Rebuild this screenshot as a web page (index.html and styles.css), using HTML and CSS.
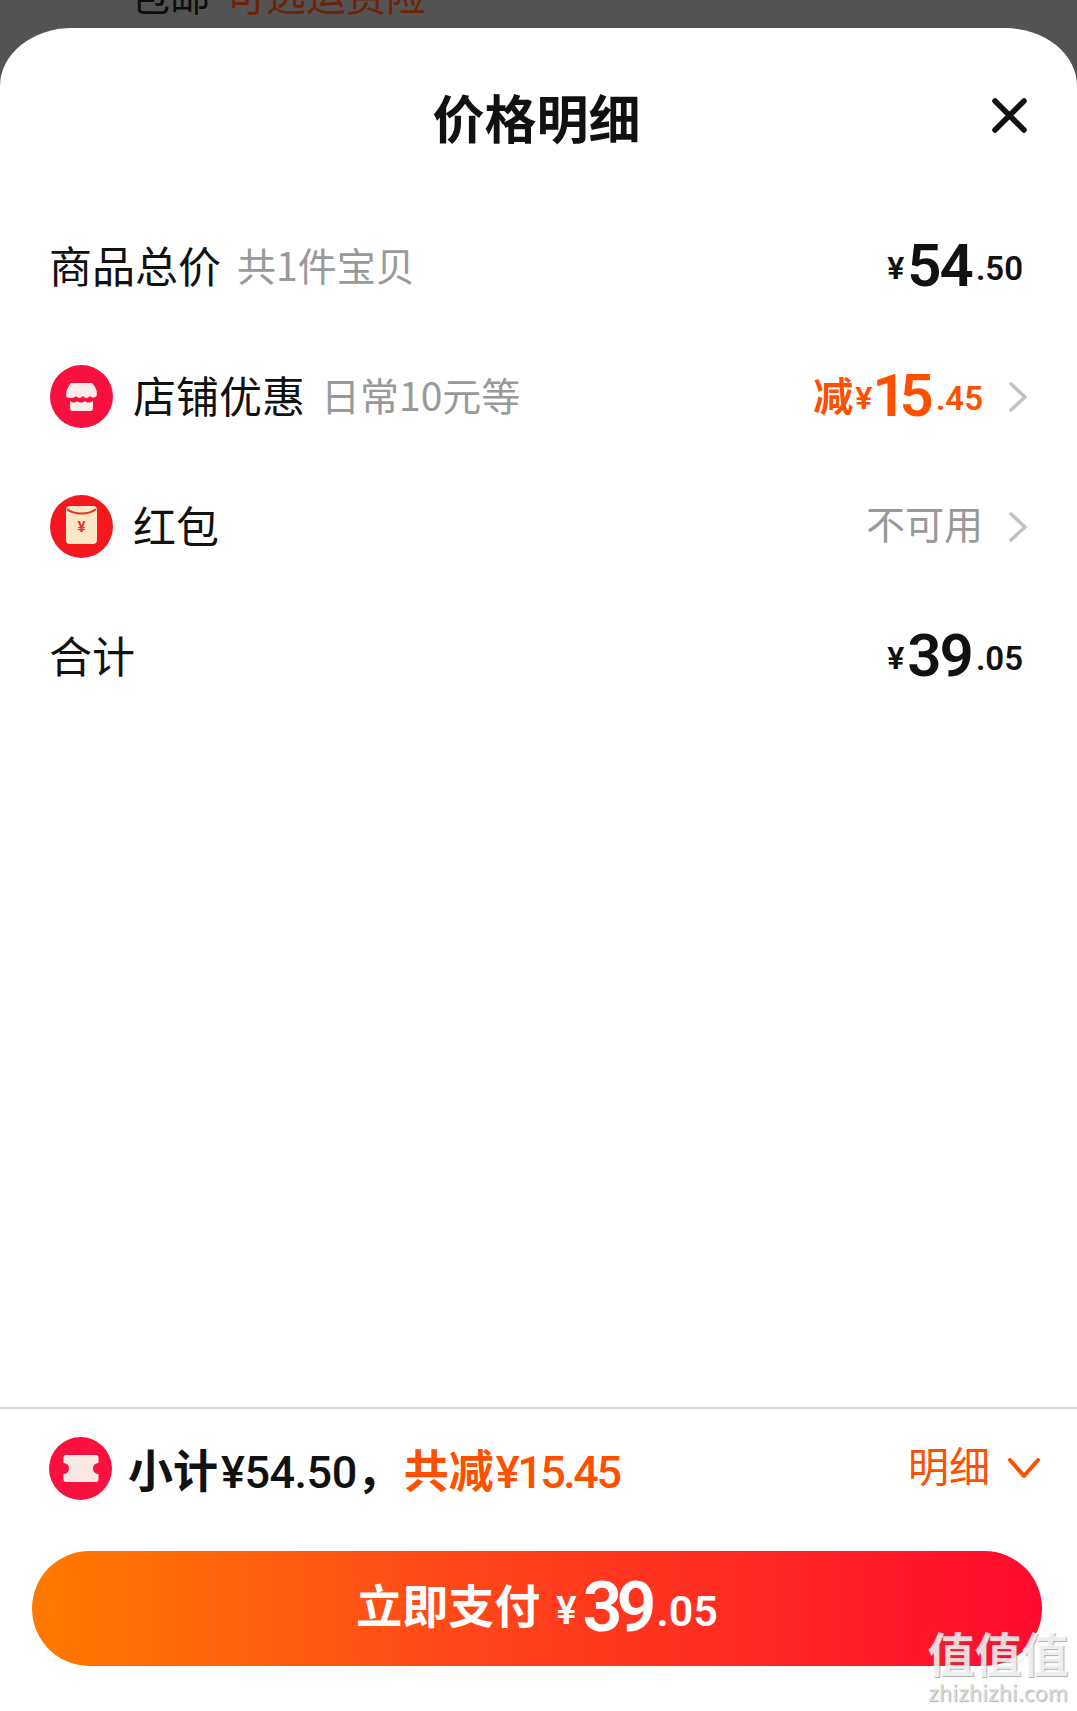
FILE: index.html
```html
<!DOCTYPE html>
<html lang="zh">
<head>
<meta charset="utf-8">
<title>价格明细</title>
<link rel="stylesheet" href="styles.css">
</head>
<body>
<div class="page">
  <div class="backdrop"><div class="backdrop-text"><span>包邮</span><span class="backdrop-red">可选运费险</span></div></div>
  <main class="sheet">
    <header class="head">
      <span></span>
      <h1 class="title">价格明细</h1>
      <svg class="close" viewBox="0 0 35 35"><path d="M3 3L32 32M32 3L3 32"/></svg>
    </header>
    <section class="rows">
      <div class="row">
        <div class="left"><span class="label">商品总价</span><span class="sub">共1件宝贝</span></div>
        <div class="price price-plain"><span class="yen">¥</span><span class="big">54</span><span class="small">.50</span></div>
      </div>
      <div class="row">
        <div class="left">
          <svg class="badge" viewBox="0 0 63 63"><circle cx="31.5" cy="31.5" r="31.5" fill="#f8103f"/><path d="M21 18H42C45 21 47 25 47 29C47 33 42 33.500 40 31C38 33.500 35 33.500 33 31C31 33.500 28 33.500 26 31C24 33.500 19 33.500 16.500 32C15 28 18 21 21 18Z" fill="#fdecea"/><path d="M20 36C23 38 25 38 27 36C29 38 33 38 35 36C37 38 40 38 43 36V43C43 45 42 46 40 46H23C21 46 20 45 20 43Z" fill="#fdecea"/></svg>
          <span class="label">店铺优惠</span><span class="sub">日常10元等</span>
        </div>
        <div class="right">
          <div class="price price-orange"><span class="cut">减</span><span class="yen">¥</span><span class="big">15</span><span class="small">.45</span></div>
          <svg class="chev" viewBox="0 0 18 30"><path d="M2 2L16 15L2 28"/></svg>
        </div>
      </div>
      <div class="row">
        <div class="left">
          <svg class="badge" viewBox="0 0 63 63"><circle cx="31.5" cy="31.500" r="31.500" fill="#f5191f"/><rect x="16" y="11" width="31" height="38" rx="4" fill="#fbe6c8"/><path d="M17 14C24 20 39 20 46 14" fill="none" stroke="#e8302a" stroke-width="2"/><text class="packet-yen" x="31.500" y="37" text-anchor="middle">¥</text></svg>
          <span class="label">红包</span>
        </div>
        <div class="right">
          <span class="na">不可用</span>
          <svg class="chev" viewBox="0 0 18 30"><path d="M2 2L16 15L2 28"/></svg>
        </div>
      </div>
      <div class="row">
        <div class="left"><span class="label">合计</span></div>
        <div class="price price-plain"><span class="yen">¥</span><span class="big">39</span><span class="small">.05</span></div>
      </div>
    </section>
    <div class="spacer"></div>
    <footer class="foot">
      <div class="summary">
        <div class="sum-left">
          <svg class="badge" viewBox="0 0 63 63"><circle cx="31.500" cy="31.500" r="31.500" fill="#f8103f"/><path d="M17 18H47C49 18 49.500 19 49.500 21V26A5.500 5.500 0 0 0 49.500 37V42C49.500 44 49 45 47 45H17C15 45 14.500 44 14.500 42V37A5.500 5.500 0 0 0 14.500 26V21C14.500 19 15 18 17 18Z" fill="#f8e8e4"/></svg>
          <span class="sum-text">小计<span class="sum-num">¥54.50</span>，</span><span class="sum-cut">共减<span class="sum-num-cut">¥15.45</span></span>
        </div>
        <div class="detail">
          <span class="detail-text">明细</span>
          <svg class="chev-down" viewBox="0 0 32 21"><path d="M2 2L16 18L30 2"/></svg>
        </div>
      </div>
      <button class="pay"><span class="pay-label">立即支付</span><span class="pay-yen">¥</span><span class="pay-big">39</span><span class="pay-small">.05</span></button>
    </footer>
    <div class="mark"><div class="mark-cn">值值值</div><div class="mark-en">zhizhizhi.com</div></div>
  </main>
</div>
</body>
</html>
```
FILE: styles.css
```css
* { box-sizing: border-box; }
html, body { margin: 0; padding: 0; }
body { background: #535353; font-family: "Noto Sans CJK SC", "Noto Sans", sans-serif; color: #111; }
.page { width: 1077px; height: 1711px; display: flex; flex-direction: column; overflow: hidden; }
.backdrop { height: 28px; flex: none; display: flex; align-items: flex-end; padding: 0 0 12px 130px; overflow: hidden; }
.backdrop-text { display: flex; gap: 16px; font-size: 40px; line-height: 44px; color: #0d0d0d; }
.backdrop-red { color: #6b2408; }
.sheet { position: relative; flex: 1; background: #fff; border-radius: 72px 72px 0 0 / 58px 58px 0 0; display: flex; flex-direction: column; }
.head { height: 173px; flex: none; display: grid; grid-template-columns: 1fr auto 1fr; align-items: start; padding: 54px 50px 0 46px; }
.title { margin: 0; font-size: 52px; line-height: 70px; font-weight: 700; color: #111; }
.close { width: 35px; height: 35px; justify-self: end; margin-top: 16px; }
.close path { fill: none; stroke: #111; stroke-width: 5.500; stroke-linecap: round; }
.rows { flex: none; display: flex; flex-direction: column; }
.row { height: 130px; display: flex; align-items: center; justify-content: space-between; padding: 0 50px 0 50px; }
.left { display: flex; align-items: center; }
.label { font-size: 43px; line-height: 60px; color: #111; margin: 0 0 4px -1px; }
.sub { font-size: 39px; line-height: 60px; color: #999; margin: 0 0 4px 16px; }
.badge { width: 63px; height: 63px; flex: none; margin-right: 21px; }
.packet-yen { font-family: "Roboto", sans-serif; font-size: 15px; font-weight: 700; fill: #e8302a; }
.right { display: flex; align-items: center; }
.price { display: flex; align-items: center; font-family: "Roboto", sans-serif; font-weight: 600; }
.price-plain { color: #111; padding-right: 4px; }
.price-orange { color: #ff5000; }
.yen { font-size: 32px; margin-right: 3px; margin-top: 4px; }
.big { font-size: 60px; line-height: 60px; letter-spacing: -2px; margin-right: 4px; }
.small { font-size: 33px; margin-top: 4px; }
.price-orange .yen { margin-right: 0; }
.price-orange .big { letter-spacing: -7px; margin-right: 9px; }
.cut { font-family: "Noto Sans CJK SC", sans-serif; font-weight: 700; font-size: 40px; margin-right: 2px; margin-bottom: 4px; }
.na { font-size: 39px; color: #999; margin-bottom: 8px; }
.chev { width: 18px; height: 30px; margin-left: 26px; margin-top: 1px; }
.chev path { fill: none; stroke: #c2c2c2; stroke-width: 3.500; stroke-linecap: round; stroke-linejoin: round; }
.spacer { flex: 1; }
.foot { flex: none; border-top: 2px solid #d8d8d8; padding: 0 35px 45px 32px; }
.summary { height: 143px; display: flex; align-items: center; justify-content: space-between; padding: 0 2px 22px 17px; margin-top: -1px; }
.sum-left { display: flex; align-items: center; }
.sum-left .badge { margin-right: 16px; }
.sum-text { font-size: 45px; font-weight: 700; color: #111; }
.sum-cut { font-size: 45px; font-weight: 700; color: #ff5000; margin-left: 2px; }
.sum-num { font-family: "Roboto", sans-serif; font-weight: 500; letter-spacing: -.5px; margin-left: 3px; }
.sum-num-cut { font-family: "Roboto", sans-serif; font-weight: 500; letter-spacing: -2.500px; margin-left: 2px; }
.detail { display: flex; align-items: center; gap: 18px; color: #ff5000; font-size: 41px; }
.detail-text { margin-bottom: 9px; }
.chev-down { width: 32px; height: 21px; }
.chev-down path { fill: none; stroke: #ff5000; stroke-width: 4; stroke-linecap: round; stroke-linejoin: round; }
.pay { width: 100%; height: 115px; border: 0; border-radius: 58px; background: linear-gradient(90deg, #ff7a00 0%, #ff4a18 40%, #ff0a2e 100%); color: #fff; display: flex; align-items: center; justify-content: center; padding: 0; font-family: "Roboto", sans-serif; font-weight: 600; }
.pay-label { font-family: "Noto Sans CJK SC", sans-serif; font-weight: 700; font-size: 46px; margin: 0 16px 12px 0; }
.pay-yen { font-size: 38px; margin: 4px 6px 0 0; }
.pay-big { font-size: 70px; line-height: 70px; letter-spacing: -6px; margin: 0 6px 4px 0; }
.pay-small { font-size: 43px; margin-top: 4px; }
.mark { position: absolute; right: 8px; bottom: 7px; width: 142px; color: rgba(255,255,255,.78); text-shadow: 1px 1px 1px rgba(120,120,120,.6); text-align: center; }
.mark-cn { font-size: 47px; line-height: 50px; font-weight: 700; }
.mark-en { font-size: 22px; line-height: 26px; margin-top: 1px; color: rgba(225,225,225,.9); white-space: nowrap; }
```
